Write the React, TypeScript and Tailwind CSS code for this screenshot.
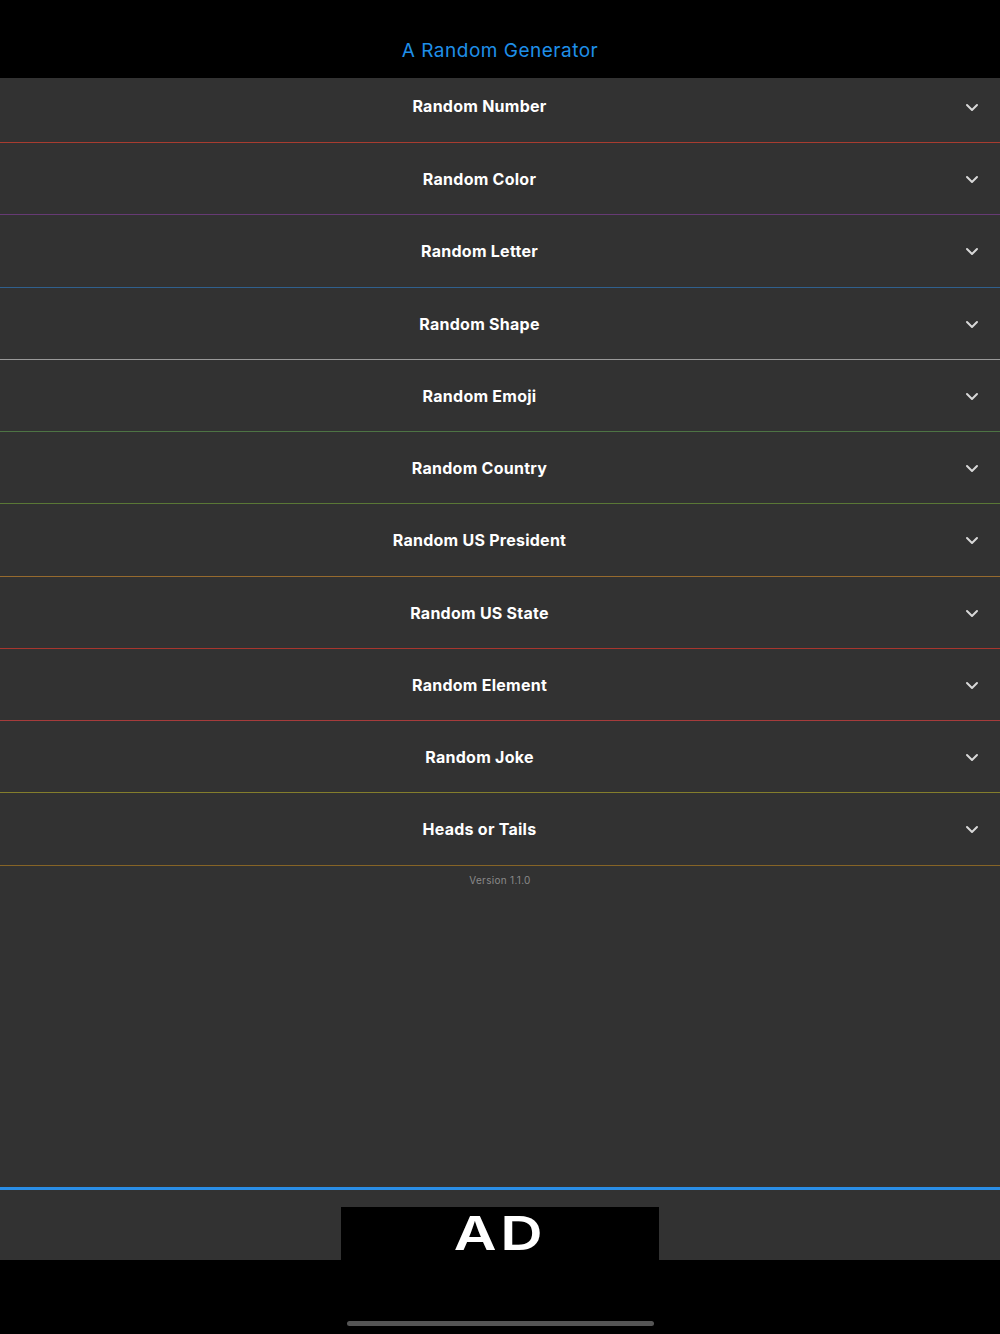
import React from "react";

const rows: { label: string; color: string; h: string }[] = [
  { label: "Random Number", color: "#a83c30", h: "h-[64px] pb-[8px]" },
  { label: "Random Color", color: "#663a74", h: "h-[71px]" },
  { label: "Random Letter", color: "#30608e", h: "h-[72px]" },
  { label: "Random Shape", color: "#9a9a9a", h: "h-[71px]" },
  { label: "Random Emoji", color: "#4d7444", h: "h-[71px]" },
  { label: "Random Country", color: "#5a7836", h: "h-[71px]" },
  { label: "Random US President", color: "#966a2e", h: "h-[72px]" },
  { label: "Random US State", color: "#a8362e", h: "h-[71px]" },
  { label: "Random Element", color: "#a63c3c", h: "h-[71px]" },
  { label: "Random Joke", color: "#847e2c", h: "h-[71px]" },
  { label: "Heads or Tails", color: "#866426", h: "h-[72px]" },
];

function Chevron() {
  return (
    <svg width="14" height="9" viewBox="0 0 14 9" fill="none">
      <path d="M2 2 L7 7 L12 2" stroke="#d8d8d8" strokeWidth="2" strokeLinecap="round" strokeLinejoin="round" />
    </svg>
  );
}

export default function App() {
  return (
    <div className="w-[1000px] h-[1334px] bg-black flex flex-col overflow-hidden" style={{ fontFamily: "Inter, 'Noto Sans', sans-serif" }}>
      <div className="h-[78px] flex items-end justify-center pb-[18px]">
        <span className="text-[19px] text-[#1f8fe8] tracking-[0.5px] leading-none">A Random Generator</span>
      </div>
      <div className="flex-1 bg-[#323232] flex flex-col">
        {rows.map((r, i) => (
          <div key={r.label} className="flex flex-col">
            <div className={`flex items-center gap-[6px] pr-[21px] ${r.h}`}>
              <span className="flex-1 text-center text-white font-bold text-[16px] tracking-[0.25px]">{r.label}</span>
              <div className={`flex ${i === 0 ? "mt-[2px]" : "mt-[1px]"}`}>
                <Chevron />
              </div>
            </div>
            <div className="h-px w-full" style={{ backgroundColor: r.color }} />
          </div>
        ))}
        <div className="flex justify-center pt-[7px]">
          <span className="text-[10px] text-[#8a8a8a] tracking-[0.3px]">Version 1.1.0</span>
        </div>
        <div className="flex-1" />
        <div className="h-[3px] bg-[#2a8ee6]" />
        <div className="h-[70px] flex items-end justify-center">
          <div className="w-[318px] h-[53px] bg-black flex items-center justify-center pb-[3px]">
            <span className="text-white font-semibold text-[47px] leading-none tracking-[3px] inline-block scale-x-[1.25]" style={{ fontFamily: "Inter, sans-serif" }}>AD</span>
          </div>
        </div>
      </div>
      <div className="h-[74px] flex items-end justify-center pb-[8px]">
        <div className="w-[307px] h-[5px] rounded-full bg-[#555555]" />
      </div>
    </div>
  );
}
